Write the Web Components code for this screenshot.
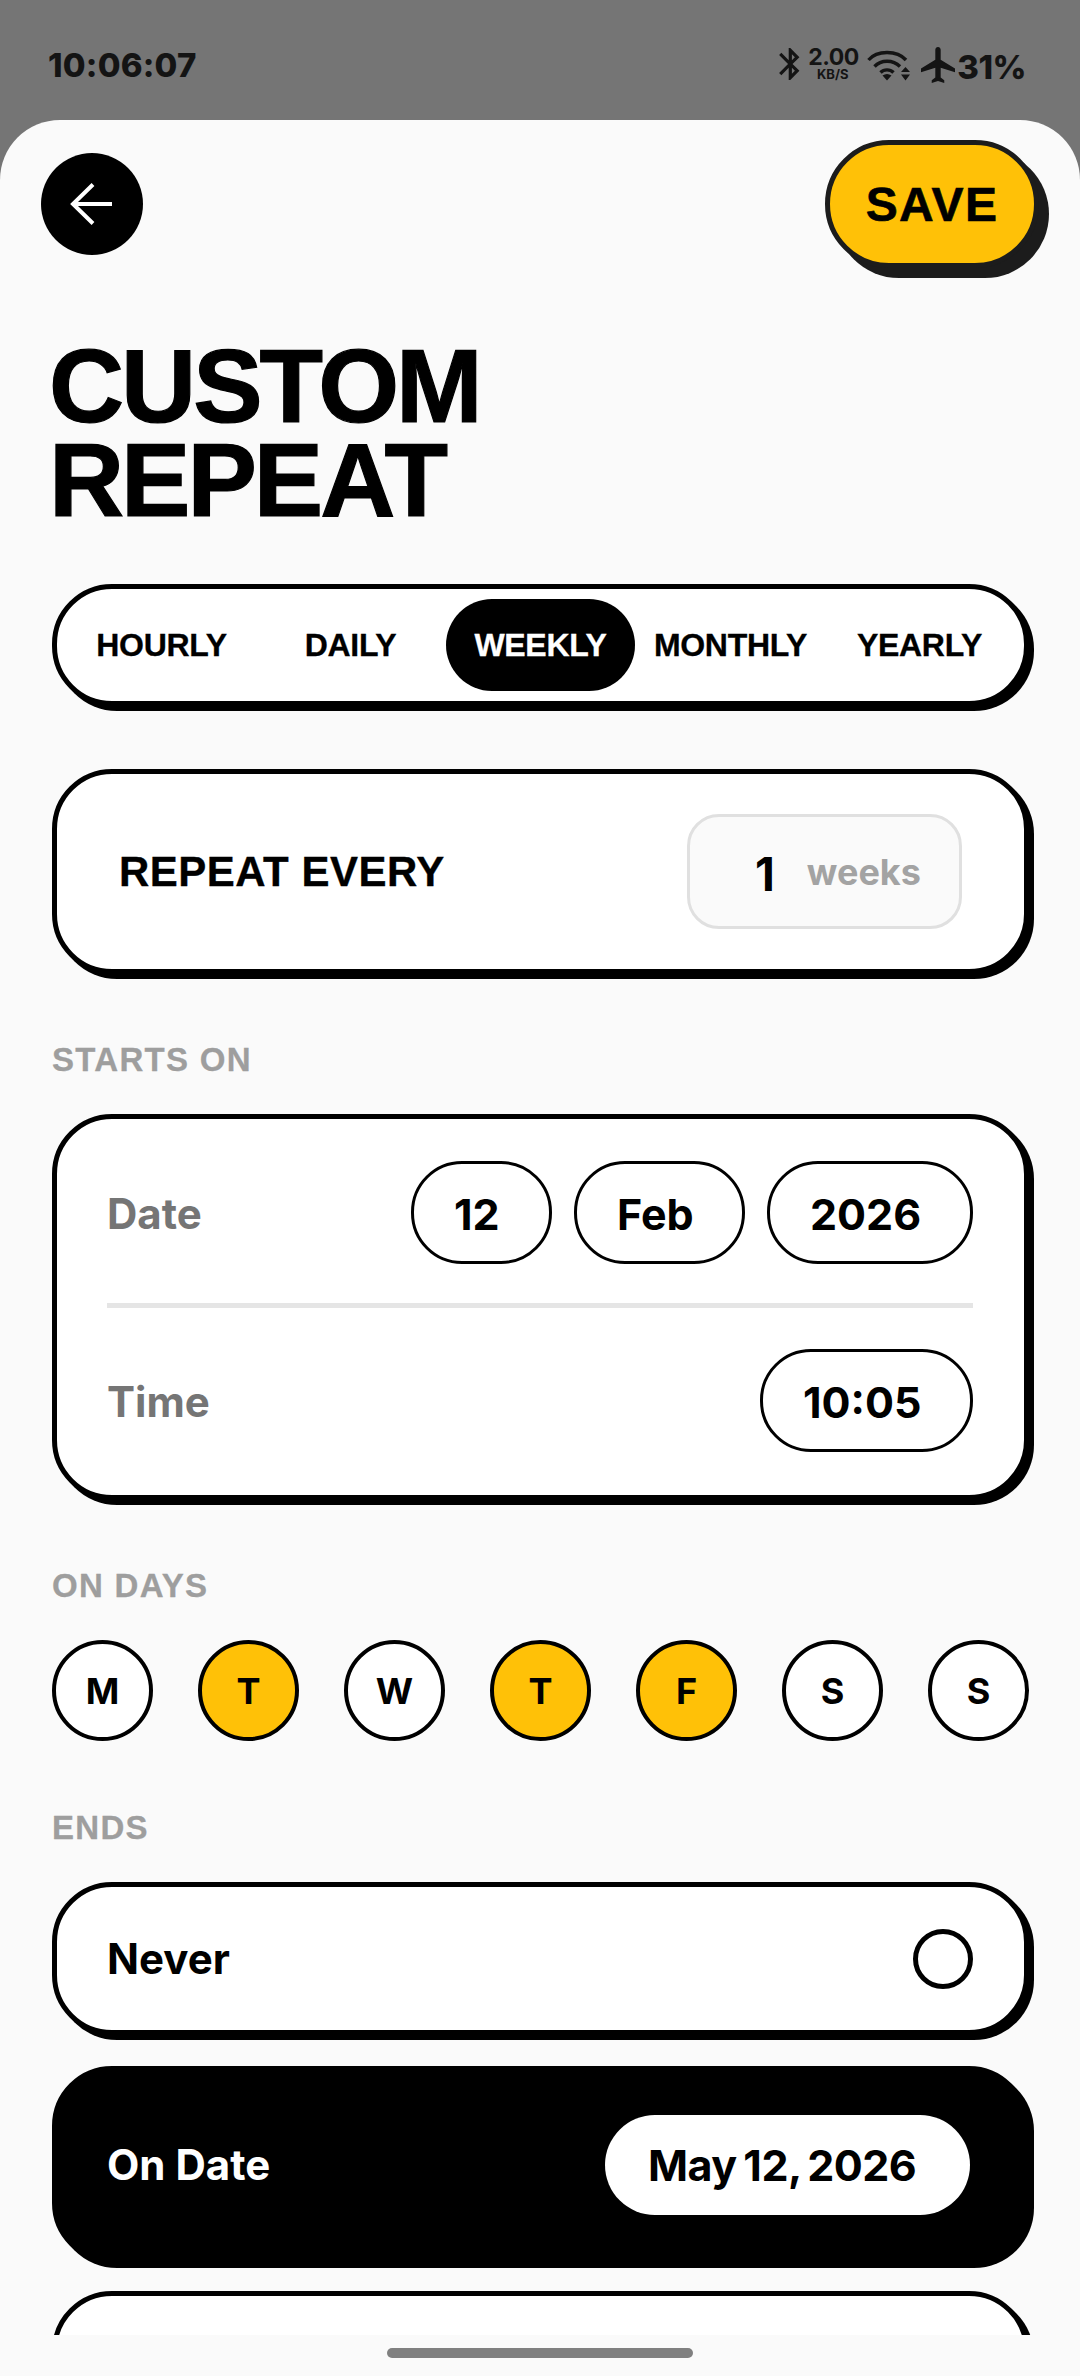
<!DOCTYPE html>
<html lang="en">
<head>
<meta charset="utf-8">
<title>Custom Repeat</title>
<style>
  html, body { margin: 0; height: 100%; background: #757575; }
  body { font-family: "Liberation Sans", Arial, sans-serif; }
</style>
</head>
<body>
<repeat-app>
  <status-bar slot="status"></status-bar>

  <top-bar></top-bar>
  <page-title>CUSTOM<br>REPEAT</page-title>

  <segment-tabs>
    <tab-item>HOURLY</tab-item>
    <tab-item>DAILY</tab-item>
    <tab-item active>WEEKLY</tab-item>
    <tab-item>MONTHLY</tab-item>
    <tab-item>YEARLY</tab-item>
  </segment-tabs>

  <repeat-every></repeat-every>

  <section-label style="--top:68px">STARTS ON</section-label>
  <starts-card>
    <span slot="date-label">Date</span>
    <value-pill slot="date" w="141">12</value-pill>
    <value-pill slot="date" w="171">Feb</value-pill>
    <value-pill slot="date" w="206">2026</value-pill>
    <span slot="time-label">Time</span>
    <value-pill slot="time" w="213">10:05</value-pill>
  </starts-card>

  <section-label style="--top:68px">ON DAYS</section-label>
  <day-row>
    <day-dot>M</day-dot>
    <day-dot on>T</day-dot>
    <day-dot>W</day-dot>
    <day-dot on>T</day-dot>
    <day-dot on>F</day-dot>
    <day-dot>S</day-dot>
    <day-dot>S</day-dot>
  </day-row>

  <section-label style="--top:69px">ENDS</section-label>
  <end-option h="153" style="--top:0px">Never<radio-dot slot="end"></radio-dot></end-option>
  <end-option h="197" dark style="--top:31px">On Date<date-chip slot="end">May 12, 2026</date-chip></end-option>
  <end-option h="153" style="--top:28px"></end-option>
</repeat-app>

<script>
// small helper, every element just sets its shadow markup once
class Base extends HTMLElement {
  connectedCallback() {
    if (this.shadowRoot) return
    this.attachShadow({ mode: 'open' }).innerHTML = this.markup()
  }
}

const wide = `font-family: Inter, "Liberation Sans", sans-serif; font-weight: 700;`
const card = `box-sizing: border-box; width: 977px; background: #fff; border: 5px solid #000; border-radius: 60px; box-shadow: 5px 5px 0 #000;`

class RepeatApp extends Base {
  markup() {
    return `<style>
      :host { display: flex; flex-direction: column; width: 1080px; height: 2376px; background: #757575; overflow: hidden; }
      .sheet { flex: 1; display: flex; flex-direction: column; background: #fafafa; border-radius: 60px 60px 0 0; min-height: 0; }
      .scroll { height: 2215px; overflow: hidden; padding-left: 52px; flex: none; box-sizing: border-box; }
      .nav { flex: 1; display: flex; justify-content: center; padding-top: 13px; box-sizing: border-box; }
      .handle { width: 306px; height: 10px; border-radius: 5px; background: #808080; }
    </style>
    <slot name="status"></slot>
    <div class="sheet">
      <div class="scroll"><slot></slot></div>
      <div class="nav"><div class="handle"></div></div>
    </div>`
  }
}

class StatusBar extends Base {
  markup() {
    return `<style>
      :host { display: flex; align-items: flex-start; justify-content: space-between; height: 120px; box-sizing: border-box; padding: 0 54px 0 48px; color: #141414; ${wide} }
      .time { font-size: 33px; line-height: 40px; margin-top: 45px; letter-spacing: .2px; font-weight: 800; }
      .right { display: flex; align-items: flex-start; margin-top: 47px; }
      svg { display: block; fill: #141414; flex: none; }
      .speed { width: 49px; margin: 0 10px 0 8px; text-align: center; }
      .speed b { display: block; font-size: 23px; line-height: 21px; letter-spacing: -.5px; font-weight: 700; }
      .speed i { display: block; font-style: normal; font-size: 13px; line-height: 13px; }
      .pct { font-size: 33px; line-height: 40px; margin: 0 0 0 2px; letter-spacing: -.5px; font-weight: 800; }
    </style>
    <div class="time">10:06:07</div>
    <div class="right">
      <svg style="margin-top:1px" width="21" height="32" viewBox="5 2 13 20"><path d="M17.71 7.71L12 2h-1v7.59L6.41 5 5 6.41 10.59 12 5 17.59 6.41 19 11 14.41V22h1l5.71-5.71-4.3-4.29 4.3-4.29zM13 5.83l1.88 1.88L13 9.59V5.83zm1.88 10.46L13 18.17v-3.76l1.88 1.88z"/></svg>
      <div class="speed"><b>2.00</b><i>KB/S</i></div>
      <svg style="margin-top:3px" width="43" height="31" viewBox="0 0 43 31">
        <g fill="none" stroke="#141414" stroke-width="3.4">
          <path d="M1.500 10 C10 0 30 0 39 10"/>
          <path d="M7.500 16.500 C14 9.500 26 9.500 33 16.500"/>
          <path d="M13.500 22.500 C17 19 23 19 26.500 22.500"/>
        </g>
        <path d="M15.500 25.500 Q20 22.500 24.500 25.500 L20 30.500z"/>
        <path d="M38.500 17l4.500 5h-9zM38.500 30.500l4.500-6h-9z"/>
      </svg>
      <svg style="margin-left:11px" width="34" height="36" viewBox="2 2 19 20"><path d="M21 16v-2l-8-5V3.500c0-.83-.67-1.500-1.500-1.500S10 2.670 10 3.500V9l-8 5v2l8-2.500V19l-2 1.500V22l3.500-1 3.500 1v-1.500L13 19v-5.500l8 2.500z"/></svg>
      <div class="pct">31%</div>
    </div>`
  }
}

class TopBar extends Base {
  markup() {
    return `<style>
      :host { display: flex; justify-content: space-between; align-items: flex-start; height: 219px; margin-left: -11px; width: 998px; }
      .back { width: 102px; height: 102px; border-radius: 50%; background: #000; margin-top: 33px; display: flex; align-items: center; justify-content: center; }
      .save { width: 214px; height: 128px; margin-top: 20px; box-sizing: border-box; border: 5px solid #1c1c1c; border-radius: 64px; background: #ffc107; box-shadow: 10px 10px 0 #1c1c1c; display: flex; align-items: center; justify-content: center; font-weight: 700; font-size: 48px; letter-spacing: 1.4px; color: #000; -webkit-text-stroke: .6px #000; }
    </style>
    <div class="back"><svg width="44" height="44" viewBox="0 0 44 44" fill="none" stroke="#fff" stroke-width="4"><path d="M2 22H42"/><path d="M23 2.500 3 22 23 41.500"/></svg></div>
    <div class="save">SAVE</div>`
  }
}

class PageTitle extends Base {
  markup() {
    return `<style>
      :host { display: block; margin-left: -3px; font-size: 104px; line-height: 94px; font-weight: 700; letter-spacing: -3px; color: #000; -webkit-text-stroke: 1.2px #000; }
    </style><slot></slot>`
  }
}

class SegmentTabs extends Base {
  markup() {
    return `<style>
      :host { display: flex; height: 122px; margin-top: 57px; padding: 10px; border-radius: 61px; ${card} }
    </style><slot></slot>`
  }
}

class TabItem extends Base {
  markup() {
    return `<style>
      :host { flex: 1; display: flex; align-items: center; justify-content: center; border-radius: 46px; font-size: 32px; font-weight: 700; letter-spacing: -.3px; color: #000; -webkit-text-stroke: .3px currentColor; }
      :host([active]) { background: #000; color: #fff; margin: 0 1px; }
    </style><slot></slot>`
  }
}

class RepeatEvery extends Base {
  markup() {
    return `<style>
      :host { display: flex; align-items: center; justify-content: space-between; height: 205px; margin-top: 63px; padding: 0 62px; ${card} }
      .label { font-size: 42px; font-weight: 700; letter-spacing: .5px; color: #000; -webkit-text-stroke: .3px #000; }
      .box { box-sizing: border-box; width: 275px; height: 115px; display: flex; align-items: center; background: #fafafa; border: 3px solid #e0e0e0; border-radius: 32px; padding-left: 65px; ${wide} }
      .n { font-size: 46px; color: #000; margin-top: 4px; }
      .u { font-size: 36px; color: #a3a3a3; margin-left: 32px; }
    </style>
    <span class="label">REPEAT EVERY</span>
    <div class="box"><span class="n">1</span><span class="u">weeks</span></div>`
  }
}

class SectionLabel extends Base {
  markup() {
    return `<style>
      :host { display: block; font-size: 33px; line-height: 36px; height: 72px; font-weight: 700; letter-spacing: 1.3px; color: #9e9e9e; margin-top: var(--top); -webkit-text-stroke: .3px #9e9e9e; }
    </style><slot></slot>`
  }
}

class StartsCard extends Base {
  markup() {
    return `<style>
      :host { display: block; height: 386px; padding: 42px 51px 0 50px; ${card} }
      .row { display: flex; align-items: center; justify-content: space-between; height: 103px; font-size: 42px; color: #757575; ${wide} }
      ::slotted(span) { margin-top: 2px; }
      .pills { display: flex; gap: 22px; }
      hr { border: 0; height: 5px; background: #e5e5e5; margin: 39px 0 41px; }
    </style>
    <div class="row"><slot name="date-label"></slot><div class="pills"><slot name="date"></slot></div></div>
    <hr>
    <div class="row"><slot name="time-label"></slot><div class="pills"><slot name="time"></slot></div></div>`
  }
}

class ValuePill extends Base {
  markup() {
    return `<style>
      :host { display: flex; align-items: center; box-sizing: border-box; padding: 2px 0 0 40px; height: 103px; width: ${this.getAttribute('w')}px; background: #fff; border: 3px solid #000; border-radius: 51px; font-size: 43px; color: #000; ${wide} }
    </style><slot></slot>`
  }
}

class DayRow extends Base {
  markup() {
    return `<style>
      :host { display: flex; gap: 45px; }
    </style><slot></slot>`
  }
}

class DayDot extends Base {
  markup() {
    return `<style>
      :host { display: flex; align-items: center; justify-content: center; box-sizing: border-box; width: 101px; height: 101px; background: #fff; border: 4px solid #000; border-radius: 50%; font-size: 36px; color: #000; ${wide} }
      :host([on]) { background: #ffc107; }
    </style><slot></slot>`
  }
}

class EndOption extends Base {
  markup() {
    const h = this.getAttribute('h')
    return `<style>
      :host { display: flex; align-items: center; justify-content: space-between; height: ${h}px; margin-top: var(--top); padding: 0 51px 0 50px; font-size: 42px; color: #000; ${card} ${wide} }
      :host([dark]) { background: #000; color: #fff; }
    </style><span><slot></slot></span><slot name="end"></slot>`
  }
}

class RadioDot extends Base {
  markup() {
    return `<style>
      :host { display: block; box-sizing: border-box; width: 60px; height: 60px; border: 5px solid #000; border-radius: 50%; }
    </style>`
  }
}

class DateChip extends Base {
  markup() {
    return `<style>
      :host { display: flex; align-items: center; box-sizing: border-box; padding-left: 43px; width: 365px; height: 100px; margin-right: 3px; background: #fff; color: #000; border-radius: 50px; font-size: 43px; letter-spacing: -.5px; word-spacing: -3px; ${wide} }
    </style><slot></slot>`
  }
}

customElements.define('repeat-app', RepeatApp)
customElements.define('status-bar', StatusBar)
customElements.define('top-bar', TopBar)
customElements.define('page-title', PageTitle)
customElements.define('segment-tabs', SegmentTabs)
customElements.define('tab-item', TabItem)
customElements.define('repeat-every', RepeatEvery)
customElements.define('section-label', SectionLabel)
customElements.define('starts-card', StartsCard)
customElements.define('value-pill', ValuePill)
customElements.define('day-row', DayRow)
customElements.define('day-dot', DayDot)
customElements.define('end-option', EndOption)
customElements.define('radio-dot', RadioDot)
customElements.define('date-chip', DateChip)
</script>
</body>
</html>
